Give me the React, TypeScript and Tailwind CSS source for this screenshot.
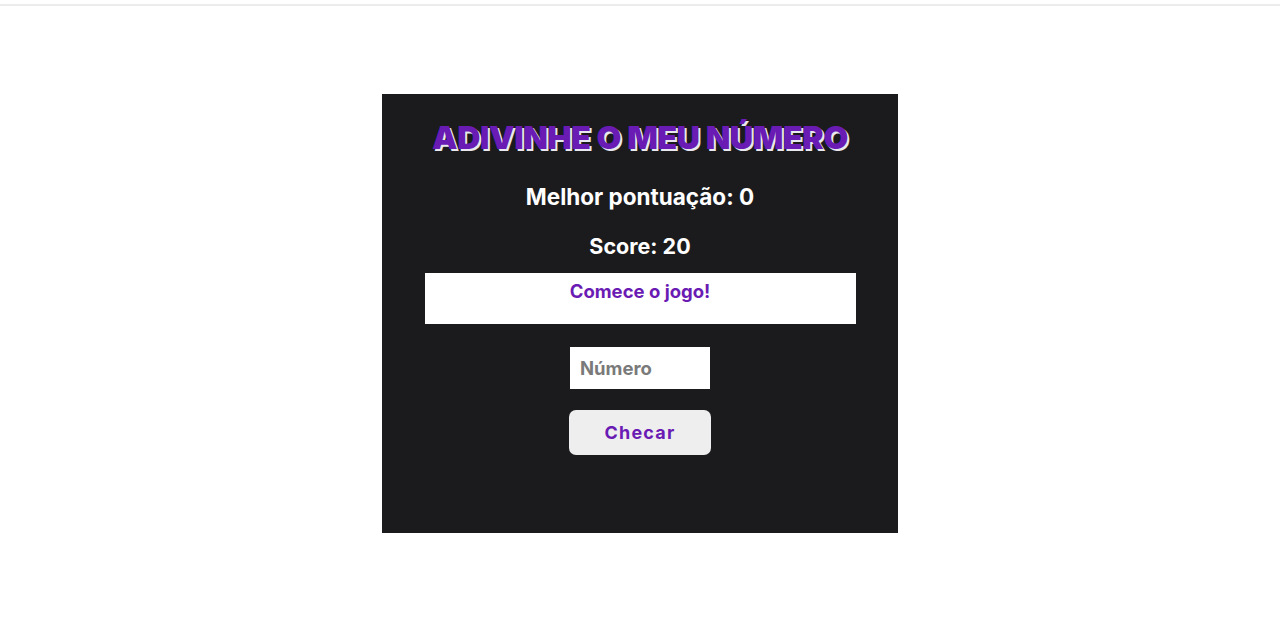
import React from "react";

// Jogo de adivinhação - tela inicial
const App = (): JSX.Element => {
    const best = 0;
    const score = 20;

    return (
        <div className="min-h-[620px] bg-white font-['Inter','Noto_Sans',sans-serif]">
            <div className="h-[4px]" />
            <div className="h-[2px] bg-[#ececec]" />
            <div className="flex justify-center pt-[88px]">
                <div className="w-[516px] h-[439px] bg-[#1b1b1d] flex flex-col items-center">
                    <h1
                        className="mt-[24px] text-[32px] leading-[40px] font-black text-[#6a1bb3] tracking-[-0.3px]"
                        style={{ textShadow: "2px 2px 0 #e8e8ee" }}
                    >
                        ADIVINHE O MEU NÚMERO
                    </h1>
                    <div className="mt-[25px] text-[22.5px] leading-[28px] font-bold text-white">
                        Melhor pontuação: {best}
                    </div>
                    <div className="mt-[21px] text-[21.5px] leading-[28px] font-bold text-white">
                        Score: {score}
                    </div>
                    <div className="mt-[13px] w-[431px] h-[51px] bg-white flex justify-center">
                        <span className="mt-[7px] text-[18.5px] leading-[22px] font-bold text-[#6a1bb3]">
                            Comece o jogo!
                        </span>
                    </div>
                    <input
                        type="number"
                        placeholder="Número"
                        className="mt-[23px] w-[140px] h-[42px] bg-white px-[10px] text-[18.5px] font-bold text-[#333] placeholder:text-[#7a7a7a] outline-none"
                    />
                    <button className="mt-[21px] w-[142px] h-[45px] rounded-[7px] bg-[#efeeef] text-[18px] font-bold tracking-[1.2px] text-[#6a1bb3]">
                        Checar
                    </button>
                </div>
            </div>
        </div>
    );
};

export default App;
